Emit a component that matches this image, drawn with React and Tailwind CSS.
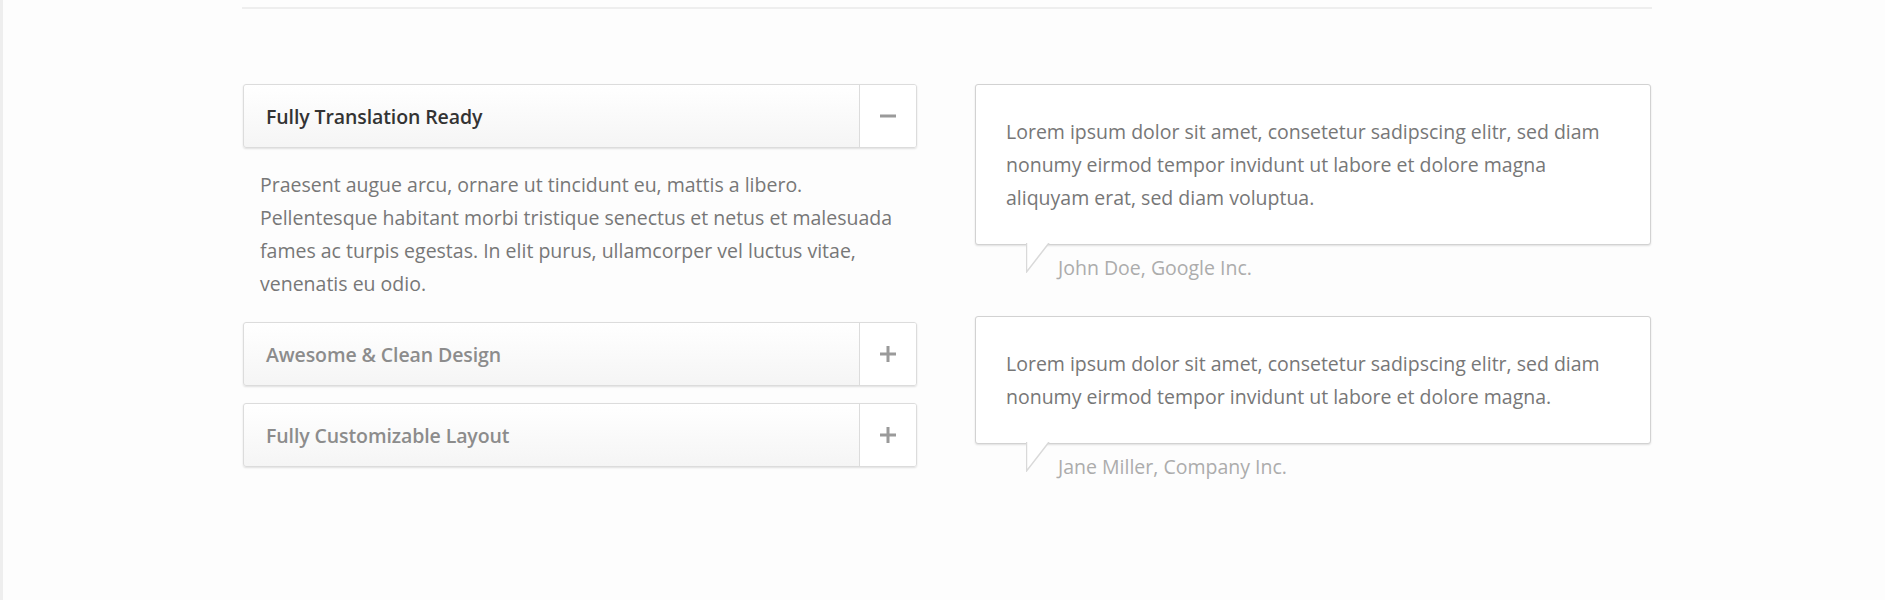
import React, { useState } from 'react';

const items = [
  {
    title: 'Fully Translation Ready',
    body: 'Praesent augue arcu, ornare ut tincidunt eu, mattis a libero. Pellentesque habitant morbi tristique senectus et netus et malesuada fames ac turpis egestas. In elit purus, ullamcorper vel luctus vitae, venenatis eu odio.',
  },
  { title: 'Awesome & Clean Design', body: 'Praesent augue arcu, ornare ut tincidunt eu, mattis a libero.' },
  { title: 'Fully Customizable Layout', body: 'Praesent augue arcu, ornare ut tincidunt eu, mattis a libero.' },
];

const quotes = [
  {
    text: 'Lorem ipsum dolor sit amet, consetetur sadipscing elitr, sed diam nonumy eirmod tempor invidunt ut labore et dolore magna aliquyam erat, sed diam voluptua.',
    author: 'John Doe, Google Inc.',
  },
  {
    text: 'Lorem ipsum dolor sit amet, consetetur sadipscing elitr, sed diam nonumy eirmod tempor invidunt ut labore et dolore magna.',
    author: 'Jane Miller, Company Inc.',
  },
];

const Toggle = ({ open }) => (
  <svg width="16" height="16" viewBox="0 0 16 16">
    <rect x="0" y="6.5" width="16" height="3" fill="#9a9a9a" />
    {!open && <rect x="6.5" y="0" width="3" height="16" fill="#9a9a9a" />}
  </svg>
);

const AccordionItem = ({ item, open, onToggle }) => (
  <div className="mb-[17px]">
    <button
      onClick={onToggle}
      className="flex w-full h-[64px] text-left border border-[#dcdcdc] rounded-[3px] overflow-hidden shadow-[0_1px_2px_rgba(0,0,0,0.12)] bg-gradient-to-b from-white to-[#f5f5f5]"
    >
      <span
        className={`flex-1 flex items-center pl-[22px] pt-[1px] text-[19.5px] font-semibold tracking-[-0.1px] ${open ? 'text-[#333]' : 'text-[#8c8c8c]'}`}
      >
        {item.title}
      </span>
      <span className="w-[57px] flex items-center justify-center border-l border-[#dcdcdc] bg-white">
        <Toggle open={open} />
      </span>
    </button>
    {open && (
      <p className="-mb-[17px] pl-[17px] pr-[16px] pt-[20px] pb-[22px] text-[19.5px] leading-[33px] text-[#777]">
        {item.body}
      </p>
    )}
  </div>
);

const Quote = ({ q }) => (
  <div className="mb-[32px]">
    <div className="relative bg-white border border-[#d2d2d2] rounded-[3px] shadow-[0_1px_2px_rgba(0,0,0,0.12)] px-[30px] py-[30px] text-[19.5px] leading-[33px] text-[#777]">
      {q.text}
      <svg className="absolute left-[50px] top-full -mt-[1px]" width="24" height="30" viewBox="0 0 24 30">
        <polygon points="0.5,0 0.5,29 23,0" fill="#ffffff" />
        <polyline points="0.5,0 0.5,29 23,0" fill="none" stroke="#d9d9d9" strokeWidth="1.5" />
      </svg>
    </div>
    <div className="pl-[83px] mt-[6px] text-[19.5px] leading-[33px] text-[#acacac]">{q.author}</div>
  </div>
);

export default function App() {
  const [open, setOpen] = useState(0);

  return (
    <div className="min-h-screen w-full flex bg-[#fdfdfd] font-['Open_Sans',sans-serif]">
      <div className="w-[3px] bg-[#eeeeee]" />
      <div className="ml-[239px] w-[1410px] pt-[7px]">
        <div className="h-[2px] bg-[#eeeeee]" />
        <div className="mt-[75px] ml-[1px] grid grid-cols-[674px_676px] gap-x-[58px]">
          <div>
            {items.map((item, i) => (
              <AccordionItem key={item.title} item={item} open={open === i} onToggle={() => setOpen(open === i ? -1 : i)} />
            ))}
          </div>
          <div>
            {quotes.map((q) => (
              <Quote key={q.author} q={q} />
            ))}
          </div>
        </div>
      </div>
    </div>
  );
}
